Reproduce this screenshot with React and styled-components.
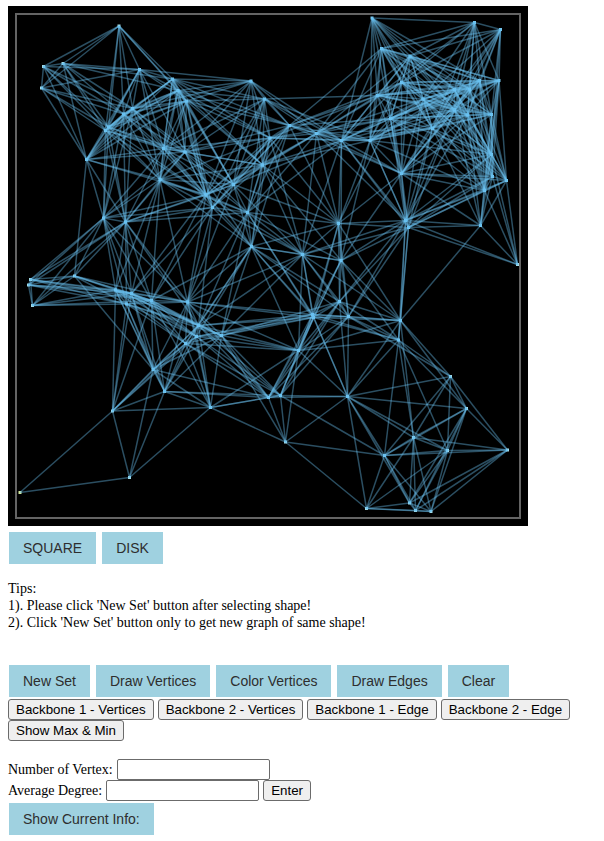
import React from "react";
import styled, { createGlobalStyle } from "styled-components";

const GlobalStyle = createGlobalStyle`
  body {
    margin: 0;
    background: #fff;
    color: #000;
    font-family: "Liberation Serif", "Times New Roman", serif;
    font-size: 14px;
    line-height: 17px;
  }
`;

const Page = styled.main`
  padding: 6px 8px;
`;

const Board = styled.svg`
  display: block;
  width: 100%;
  max-width: 520px;
  background: #000;
`;

const ActionRow = styled.div`
  display: flex;
  flex-wrap: wrap;
  gap: 2px 6px;
  padding: 0 1px;
  margin-top: ${(p) => p.$top}px;
`;

const ActionButton = styled.button`
  height: 32px;
  padding: 0 14px;
  border: 0;
  background: #9fd1e0;
  color: #2e2e2e;
  font: 14px/32px "Liberation Sans", Arial, sans-serif;
  cursor: pointer;
`;

const Tips = styled.p`
  margin: 16px 0 34px;
`;

const PlainRow = styled.div`
  display: flex;
  flex-wrap: wrap;
  column-gap: 4px;
  margin-top: 2px;
`;

const PlainButton = styled.button`
  height: 21px;
  padding: 0 7px;
  border: 1px solid #6b6b6b;
  border-radius: 3px;
  background: #efefef;
  color: #000;
  font-family: "Liberation Sans", Arial, sans-serif;
  line-height: 19px;
`;

const Form = styled.form`
  margin-top: 18px;
`;

const Field = styled.div`
  display: flex;
  align-items: center;
  gap: 4px;
`;

const NumberInput = styled.input`
  box-sizing: border-box;
  width: 153px;
  height: 21px;
  padding: 1px 2px;
  border: 1px solid #6b6b6b;
  border-radius: 2px;
  background: #fff;
  font-family: "Liberation Sans", Arial, sans-serif;
`;

const RADIUS = 127;

const VERTICES = [
  [119, 26], [43.5, 66.5], [63, 63.5], [41.5, 88], [139.5, 69.5], [172.5, 79],
  [251, 81], [264.5, 99], [178, 90.5], [186.5, 101], [132.5, 108.5], [123.5, 114],
  [108.5, 127], [105.5, 130.5], [86.5, 159.5], [163.5, 148.5], [185, 152],
  [160, 179.5], [206, 195], [212.5, 207.5], [233.5, 184.5], [247.5, 212.5],
  [251.5, 246.5], [262.5, 165], [270, 138], [103.5, 218], [125.5, 222],
  [372, 18], [474.5, 22.5], [500.5, 29.5], [381.5, 48.5], [410, 56], [401.5, 82.5],
  [377.5, 95.5], [423, 99], [454.5, 89.5], [469.5, 89], [479.5, 80.5], [499, 80.5],
  [454.5, 110], [467.5, 115], [491.5, 114.5], [390.5, 118.5], [432.5, 128.5],
  [289.5, 125.5], [316.5, 133.5], [341.5, 140.5], [370, 140.5], [401.5, 173.5],
  [491.5, 154.5], [492.5, 176.5], [506.5, 180.5], [484.5, 190.5], [480.5, 225.5],
  [517.5, 264.5], [405.5, 220.5], [408.5, 227.5], [338.5, 223.5], [302.5, 254.5],
  [341, 260.5], [30.5, 279.5], [28.5, 285], [32.5, 305.5], [74.5, 276],
  [115.5, 290], [131.5, 293.5], [126.5, 304], [151.5, 300.5], [187.5, 302],
  [198.5, 325.5], [221.5, 335.5], [196.5, 336.5], [185.5, 343.5], [153, 369.5],
  [164.5, 391.5], [210.5, 407.5], [112.5, 411], [129.5, 477.5], [20, 492.5],
  [268.5, 397.5], [280.5, 395.5], [298.5, 350.5], [312.5, 314.5], [313.5, 317.5],
  [339.5, 301.5], [348.5, 316.5], [400.5, 320.5], [398.5, 340], [347.5, 396.5],
  [450.5, 376.5], [466.5, 408.5], [413.5, 437.5], [384.5, 455.5], [447.5, 450.5],
  [507.5, 450], [285.5, 442], [366.5, 508.5], [409.5, 503], [415.5, 510.5],
  [431, 511.5],
];

const isNear = (a, b) => Math.hypot(a[0] - b[0], a[1] - b[1]) < RADIUS;

const EDGES = VERTICES.flatMap((a, i) =>
  VERTICES.slice(i + 1)
    .filter((b) => isNear(a, b))
    .map((b) => [a, b])
);

// Sparse vertices show their own pale colour; busy ones take the edge colour.
const dotColor = (v) => {
  const degree = VERTICES.filter((other) => other !== v && isNear(v, other)).length;
  if (degree < 5) return "#d3e89a";
  return degree < 13 ? "#a4dce6" : "#78c8f0";
};

function GraphBoard() {
  return (
    <Board viewBox="8 6 520 520" role="img" aria-label="Random geometric graph">
      <rect x="16" y="14" width="504" height="504" fill="none" stroke="#646464" strokeWidth="2" />
      {VERTICES.map((v, i) => (
        <rect key={i} x={v[0] - 1.5} y={v[1] - 1.5} width="3" height="3" fill={dotColor(v)} />
      ))}
      <g stroke="#6cc2f2" strokeOpacity="0.4" strokeWidth="1.5">
        {EDGES.map(([a, b], i) => (
          <line key={i} x1={a[0]} y1={a[1]} x2={b[0]} y2={b[1]} />
        ))}
      </g>
    </Board>
  );
}

const ACTIONS = ["New Set", "Draw Vertices", "Color Vertices", "Draw Edges", "Clear"];
const BACKBONES = [
  "Backbone 1 - Vertices",
  "Backbone 2 - Vertices",
  "Backbone 1 - Edge",
  "Backbone 2 - Edge",
  "Show Max & Min",
];

export default function App() {
  return (
    <Page>
      <GlobalStyle />
      <GraphBoard />
      <ActionRow $top={6}>
        <ActionButton type="button">SQUARE</ActionButton>
        <ActionButton type="button">DISK</ActionButton>
      </ActionRow>
      <Tips>
        Tips:
        <br />
        1). Please click 'New Set' button after selecting shape!
        <br />
        2). Click 'New Set' button only to get new graph of same shape!
      </Tips>
      <ActionRow $top={0}>
        {ACTIONS.map((label) => (
          <ActionButton type="button" key={label}>{label}</ActionButton>
        ))}
      </ActionRow>
      <PlainRow>
        {BACKBONES.map((label) => (
          <PlainButton type="button" key={label}>{label}</PlainButton>
        ))}
      </PlainRow>
      <Form onSubmit={(e) => e.preventDefault()}>
        <Field>
          <label htmlFor="vertices">Number of Vertex:</label>
          <NumberInput id="vertices" type="text" />
        </Field>
        <Field>
          <label htmlFor="degree">Average Degree:</label>
          <NumberInput id="degree" type="text" />
          <PlainButton type="submit">Enter</PlainButton>
        </Field>
      </Form>
      <ActionRow $top={2}>
        <ActionButton type="button">Show Current Info:</ActionButton>
      </ActionRow>
    </Page>
  );
}
